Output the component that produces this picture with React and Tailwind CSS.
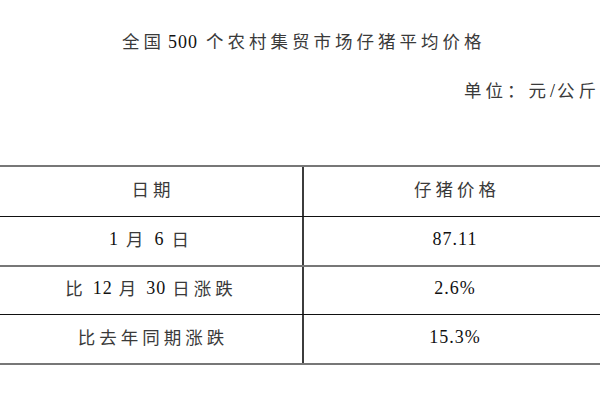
const cjk = "font-['Noto_Sans_CJK_SC','Noto_Sans_CJK_JP',sans-serif] text-[17.5px] tracking-[4px] text-[#3a3a3a]";
const num = "font-['Liberation_Serif',serif] text-[18px] tracking-[1px] text-[#111]";

function Cell({ children, left }) {
    return (
        <div
            className={`flex items-center justify-center pb-[5px] whitespace-nowrap leading-[20px] ${left ? 'border-r-2 border-[#3c3c3c]' : ''}`}
        >
            {children}
        </div>
    );
}

export default function App() {
    return (
        <div className="w-[600px] h-[400px] bg-white overflow-hidden">
            {/* Title */}
            <div className="pt-[31px] leading-[20px] whitespace-nowrap pl-[122px]">
                <span className={cjk}>全国</span>
                <span className={`${num} ml-[3px] mr-[8px]`}>500</span>
                <span className={cjk}>个农村集贸市场仔猪平均价格</span>
            </div>

            {/* Unit */}
            <div className="mt-[28px] leading-[20px] whitespace-nowrap pl-[464px]">
                <span className={cjk}>单位：元</span>
                <span className={`${num} tracking-[0px] mr-[1px]`}>/</span>
                <span className={cjk}>公</span>
                <span className={`${cjk} tracking-[0px]`}>斤</span>
            </div>

            {/* Table */}
            <div className="mt-[64px] w-[606px] border-t-2 border-[#777]">
                <div className="grid grid-cols-[304px_302px] h-[50px] border-b border-[#111]">
                    <Cell left>
                        <span className={`${cjk} pl-[4px]`}>日期</span>
                    </Cell>
                    <Cell>
                        <span className={`${cjk} pl-[4px]`}>仔猪价格</span>
                    </Cell>
                </div>
                <div className="grid grid-cols-[304px_302px] h-[50px] border-b-2 border-[#777]">
                    <Cell left>
                        <span className={num}>1</span>
                        <span className={`${cjk} ml-[7px]`}>月</span>
                        <span className={`${num} ml-[7px]`}>6</span>
                        <span className={`${cjk} ml-[7px]`}>日</span>
                    </Cell>
                    <Cell>
                        <span className={num}>87.11</span>
                    </Cell>
                </div>
                <div className="grid grid-cols-[304px_302px] h-[48px] border-b border-[#111]">
                    <Cell left>
                        <span className={cjk}>比</span>
                        <span className={`${num} ml-[6px]`}>12</span>
                        <span className={`${cjk} ml-[6px]`}>月</span>
                        <span className={`${num} ml-[6px]`}>30</span>
                        <span className={`${cjk} ml-[6px]`}>日涨跌</span>
                    </Cell>
                    <Cell>
                        <span className={num}>2.6%</span>
                    </Cell>
                </div>
                <div className="grid grid-cols-[304px_302px] h-[50px] border-b-2 border-[#777]">
                    <Cell left>
                        <span className={`${cjk} pl-[4px]`}>比去年同期涨跌</span>
                    </Cell>
                    <Cell>
                        <span className={num}>15.3%</span>
                    </Cell>
                </div>
            </div>
        </div>
    );
}
